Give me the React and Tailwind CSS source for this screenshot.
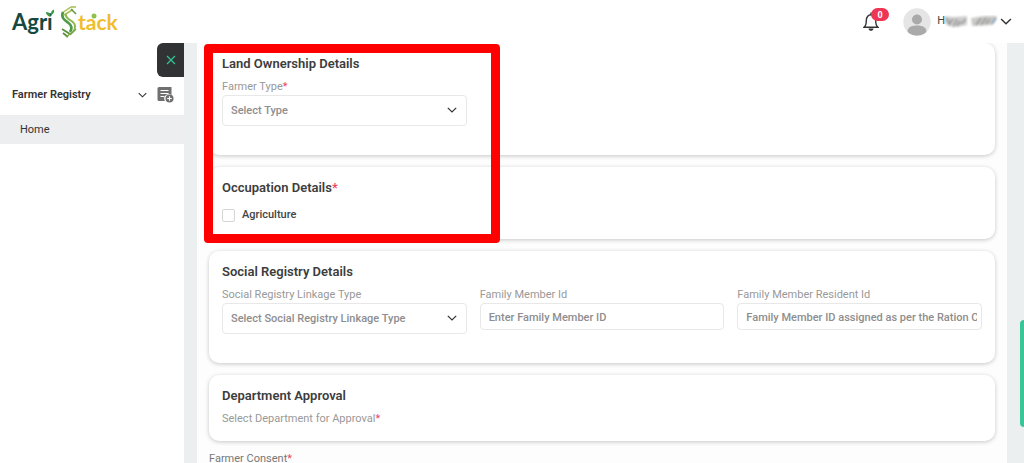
import React from "react";

function Chevron({ className }) {
  return (
    <svg viewBox="0 0 10 6" className={className} fill="none" stroke="currentColor" strokeWidth="1.2" aria-hidden="true">
      <path d="M0.8 0.8 5 5 9.2 0.8" />
    </svg>
  );
}

function Logo() {
  return (
    <a href="#home" aria-label="AgriStack" className="relative flex h-9 items-center font-[Lato,sans-serif] text-[21px] leading-9 font-bold">
      <span className="w-12 text-[22px] text-[#15493f]">Agri</span>
      <svg viewBox="0 0 18 34" className="h-[34px] w-[18px]" fill="none" aria-hidden="true">
        <path d="M2 8 11 2H16M4 10 13 4.500" stroke="#a5bf55" strokeWidth="1.500" />
        <path d="M11 4 16 9" stroke="#5f9d46" strokeWidth="1.600" />
        <path d="M3 7C0.500 13 5 15.500 8.500 18C12 20.500 12.500 23 10 27" stroke="#4f9a47" strokeWidth="2.600" />
        <path d="M6 9C5 12 8 14 11.500 16C16 19 16 23 13 27" stroke="#8fb84e" strokeWidth="2" />
        <path d="M2 24 10 29M3 28 8 32" stroke="#58933f" strokeWidth="1.800" />
        <path d="M6 32 15 25M10 30 16 24" stroke="#7da648" strokeWidth="1.500" />
      </svg>
      <span className="text-[#f0bd2c]">tack</span>
      <svg viewBox="0 0 110 36" className="absolute top-0 left-0 h-9 w-[110px]" aria-hidden="true">
        <path d="M38.500 12C35 12 34 10 34 8C37 8 38.500 9.500 38.500 12ZM39 11C38.500 8 40 6 42 5.500C42.500 8 41.500 10.500 39 11Z" fill="#3f9a45" />
        <circle cx="82" cy="12" r="2.500" fill="#8fc04a" />
      </svg>
    </a>
  );
}

function Header() {
  return (
    <header className="flex h-[43px] shrink-0 items-center justify-between bg-white pr-3 pl-3">
      <Logo />
      <div className="flex items-center">
        <button type="button" aria-label="Notifications" className="relative mr-6 h-5 w-4">
          <svg viewBox="0 0 16 20" className="h-5 w-4" fill="none" stroke="#333" strokeWidth="1.4" aria-hidden="true">
            <path d="M8 0.500V2.500M1 15.300H15C12.700 13.500 12.700 11.500 12.700 8.500C12.700 5 10.500 2.700 8 2.700S3.300 5 3.300 8.500C3.300 11.500 3.300 13.500 1 15.300Z" />
            <path d="M5.500 16.500H10.500C10.500 18 9 18.800 8 18.800S5.500 18 5.500 16.500Z" fill="#333" stroke="none" />
          </svg>
          <span className="absolute -top-1 left-2 flex h-[13px] w-[18px] items-center justify-center rounded-full bg-[#ee3553] pt-px text-[9px] leading-3 font-bold text-white">0</span>
        </button>
        <button type="button" aria-label="Account menu" className="flex items-center text-[11px] text-[#444]">
          <svg viewBox="0 0 28 28" className="mr-1.5 h-7 w-7" aria-hidden="true">
            <defs>
              <clipPath id="avatar"><circle cx="14" cy="14" r="13.700" /></clipPath>
            </defs>
            <circle cx="14" cy="14" r="13.700" fill="#e5e5e5" />
            <g fill="#aaa" clipPath="url(#avatar)">
              <circle cx="14" cy="11.500" r="5" />
              <path d="M4.500 24C4.500 19.500 8 17.500 14 17.500S23.500 19.500 23.500 24C20.500 29 7.500 29 4.500 24Z" />
            </g>
          </svg>
          <span>H</span>
          <svg viewBox="0 0 53 14" className="mr-0.5 h-3.5 w-[53px]" aria-hidden="true">
            <defs>
              <filter id="smudge"><feGaussianBlur stdDeviation="0.9" /></filter>
            </defs>
            <g filter="url(#smudge)">
              <path d="M-2 1 8 2 22 1V10L12 12 0 9Z" fill="#cfcfcf" />
              <path d="M26 3 40 1 52 1 47 10 27 11Z" fill="#cbcac7" />
              <path d="M2 3 5 11M4 9 8 4M8 12 12 4M12 11 15 6M16 9 21 4M31 10 36 3M36 10 41 3M41 9 45 4" stroke="#8f8f8f" strokeWidth="1.600" fill="none" />
              <path d="M47 9 51 3" stroke="#7294b5" strokeWidth="1.800" />
            </g>
          </svg>
          <Chevron className="h-[7px] w-3 text-[#333]" />
        </button>
      </div>
    </header>
  );
}

function Sidebar() {
  return (
    <aside className="flex w-[184px] shrink-0 flex-col bg-white text-[#333]">
      <button type="button" aria-label="Close menu" className="flex h-[34px] w-[27px] items-center justify-center self-end rounded-l-md bg-[#303233]">
        <svg viewBox="0 0 10 10" className="h-2.5 w-2.5" stroke="#35c493" strokeWidth="1.200" aria-hidden="true">
          <path d="M1 1 9 9M9 1 1 9" />
        </svg>
      </button>
      <div className="flex h-[38px] items-center pr-2.5 pb-[3px] pl-3">
        <button type="button" className="flex flex-1 items-center justify-between pt-px text-[11px] font-semibold">
          Farmer Registry
          <Chevron className="h-[6px] w-[9px]" />
        </button>
        <button type="button" aria-label="Add registry" className="ml-2.5">
          <svg viewBox="0 0 17 17" className="h-[17px] w-[17px]" aria-hidden="true">
            <path d="M2 1H14.500V9A4.500 4.500 0 0 0 8 15H2A1.500 1.500 0 0 1 0.500 13.500V2.500A1.500 1.500 0 0 1 2 1Z" fill="#707070" />
            <path d="M3.500 4.500H11.500M3.500 7.500H11.500M3.500 10.500H7.500" stroke="#fff" strokeWidth="1.200" />
            <circle cx="12.500" cy="12.500" r="4" fill="#707070" />
            <path d="M12.500 10.200V14.800M10.200 12.500H14.800" stroke="#fff" strokeWidth="1.100" />
          </svg>
        </button>
      </div>
      <nav>
        <a href="#home" className="flex h-[29px] items-center bg-[#eceeef] pt-0.5 pl-5 text-[11px]">Home</a>
      </nav>
    </aside>
  );
}

function Required() {
  return <span className="text-[#ee4560]">*</span>;
}

function Card({ title, required, className = "", children }) {
  return (
    <section className={`rounded-[10px] bg-white px-[13px] pt-[11px] shadow-[0_1px_4px_rgba(0,0,0,0.22)] ${className}`}>
      <h2 className="text-[13px] leading-5 font-semibold text-[#3d3d3d]">
        {title}
        {required && <Required />}
      </h2>
      {children}
    </section>
  );
}

const labelClass = "block text-[11px] leading-4 text-[#999]";

function SelectField({ id, label, required, placeholder }) {
  return (
    <div>
      <label htmlFor={id} className={labelClass}>
        {label}
        {required && <Required />}
      </label>
      <div className="relative">
        <select id={id} className="block h-[31px] w-full appearance-none rounded border border-[#e8e8e8] bg-white px-2 pt-0.5 text-[11px] font-medium text-[#8e8e8e]">
          <option>{placeholder}</option>
        </select>
        <Chevron className="pointer-events-none absolute top-3 right-2.5 h-[6px] w-[10px] text-[#333]" />
      </div>
    </div>
  );
}

function TextField({ id, label, placeholder }) {
  return (
    <div>
      <label htmlFor={id} className={labelClass}>{label}</label>
      <input id={id} type="text" placeholder={placeholder} className="block h-[27px] w-full rounded border border-[#e8e8e8] bg-white pt-0.5 pr-1 pl-2 text-[11px] font-medium placeholder:text-[#8e8e8e]" />
    </div>
  );
}

const fieldGrid = "mt-[5px] grid grid-cols-3 gap-[13px]";

export default function App() {
  return (
    <div className="flex h-screen flex-col overflow-hidden bg-white font-[Roboto,sans-serif]">
      <Header />
      <div className="flex min-h-0 flex-1">
        <Sidebar />
        <main className="relative min-w-0 flex-1 overflow-hidden bg-[#eceff0] pr-[17px] pl-[13px]">
          <form className="flex min-h-full flex-col gap-3 bg-[#fdfdfd] px-3">
            <Card title="Land Ownership Details" className="pb-[29px]">
              <div className={fieldGrid}>
                <SelectField id="farmer-type" label="Farmer Type" required placeholder="Select Type" />
              </div>
            </Card>
            <Card title="Occupation Details" required className="pb-4">
              <label className="mt-[9px] flex h-4 items-center gap-[7px] text-[11px] font-medium text-[#444]">
                <input type="checkbox" className="h-[13px] w-[13px] appearance-none rounded-[2px] border border-[#d5d5d5] bg-white checked:bg-[#35c493]" />
                Agriculture
              </label>
            </Card>
            <Card title="Social Registry Details" className="pb-[29px]">
              <div className={fieldGrid}>
                <SelectField id="linkage" label="Social Registry Linkage Type" placeholder="Select Social Registry Linkage Type" />
                <TextField id="member-id" label="Family Member Id" placeholder="Enter Family Member ID" />
                <TextField id="resident-id" label="Family Member Resident Id" placeholder="Family Member ID assigned as per the Ration Card" />
              </div>
            </Card>
            <Card title="Department Approval" className="pb-3.5">
              <p className={`mt-[5px] ${labelClass}`}>
                Select Department for Approval
                <Required />
              </p>
            </Card>
            <p className="-mt-0.5 text-[11px] leading-4 text-[#777]">
              Farmer Consent
              <Required />
            </p>
          </form>
          <div className="pointer-events-none absolute top-px left-5 h-[199px] w-[296px] rounded-[4px] border-[9px] border-[#fe0000]" />
          <div className="absolute top-[277px] right-0 h-[107px] w-1 rounded-l-sm bg-[#38c697]" />
        </main>
      </div>
    </div>
  );
}
